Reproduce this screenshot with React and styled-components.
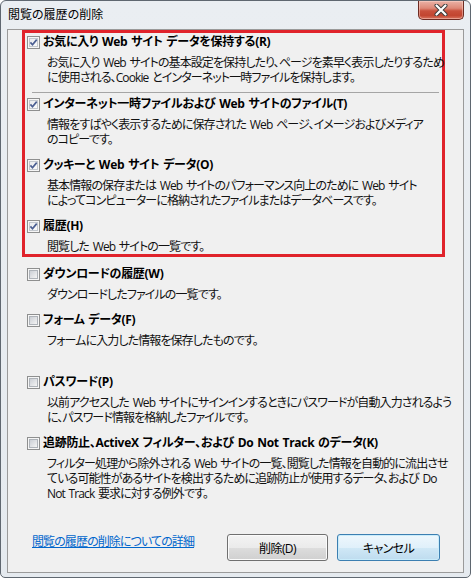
import React from 'react';
import styled, { createGlobalStyle } from 'styled-components';

const GlobalStyle = createGlobalStyle`
    html, body {
        margin: 0;
        padding: 0;
        background: #ffffff;
    }

    body {
        font-family: "Open Sans", "Noto Sans CJK JP", sans-serif;
        font-size: 12px;
        color: #000000;
        font-feature-settings: "palt";
    }
`

const Window = styled.div`
    box-sizing: border-box;
    width: 471px;
    border: 1px solid #5f6770;
    border-radius: 6px 6px 5px 5px;
    background: linear-gradient(#eaeef2, #e5eaef);
    padding: 0 6px 4px 6px;
`

const TitleBar = styled.div`
    display: flex;
    align-items: center;
    justify-content: space-between;
    height: 28px;
`

const Title = styled.span`
    padding-left: 1px;
    line-height: 16px;
    color: #000000;
`

const CloseButton = styled.div`
    align-self: flex-start;
    box-sizing: border-box;
    width: 46px;
    height: 19px;
    border: 1px solid #6d2b22;
    border-top: none;
    border-radius: 0 0 5px 5px;
    background: linear-gradient(#eab2a6 0%, #dd8877 40%, #c9503c 55%, #c24530 80%, #d9745f 100%);
    box-shadow: inset 0 0 0 1px rgba(255, 220, 210, 0.45);
    display: flex;
    align-items: center;
    justify-content: center;
`

const Panel = styled.div`
    border: 1px solid #9a9a9a;
    background: #f0f0f0;
    padding-bottom: 11px;
`

const Group = styled.div`
    margin: ${p => p.$marked ? '0 18px 0 14px' : '9px 18px 0 14px'};
    border: ${p => p.$marked ? '3px solid #e0232b' : 'none'};
    padding: ${p => p.$marked ? '1px 0 0 2px' : '0 0 0 5px'};
`

const Item = styled.div`
    margin-top: ${p => p.$gap}px;
`

const Row = styled.div`
    display: flex;
    align-items: center;
    gap: 3px;
    height: 16px;
`

const Box = styled.span`
    position: relative;
    box-sizing: border-box;
    width: 13px;
    height: 13px;
    flex: none;
    border: 1px solid #8e8f8f;
    background: #f6f6f6;

    &::before {
        content: "";
        position: absolute;
        left: 1px;
        top: 1px;
        width: 9px;
        height: 9px;
        box-sizing: border-box;
        border: 1px solid ${p => p.$checked ? '#c3c8ce' : '#aeb3b9'};
        background: ${p => p.$checked
            ? 'linear-gradient(135deg, #e9ebee, #fbfbfb)'
            : 'linear-gradient(135deg, #cbcfd5, #f4f4f4)'};
    }

    svg {
        position: absolute;
        left: 0;
        top: 0;
    }
`

const Label = styled.span`
    font-weight: 700;
    line-height: 16px;
    letter-spacing: -0.3px;
    word-spacing: 1px;
    white-space: nowrap;
`

const Desc = styled.div`
    margin-top: 5px;
    padding-left: 20px;
    line-height: 15px;
    letter-spacing: -0.9px;
    word-spacing: 1.5px;
    white-space: nowrap;
    color: #111111;
`

const Line = styled.div``

const Separator = styled.div`
    height: 1px;
    margin: 7px 3px 3px 5px;
    background: #a5a5a5;
`

const Footer = styled.div`
    display: flex;
    align-items: flex-start;
    margin-top: 33px;
    padding: 0 23px 0 24px;
`

const Link = styled.a`
    color: #0066cc;
    text-decoration: underline;
    line-height: 16px;
    letter-spacing: -0.9px;
    cursor: pointer;
`

const Buttons = styled.div`
    margin-left: auto;
    display: flex;
    gap: 9px;
`

const Button = styled.button`
    box-sizing: border-box;
    width: ${p => p.$width}px;
    height: 27px;
    padding: 0;
    border: 1px solid ${p => p.$default ? '#3c7fb1' : '#707070'};
    border-radius: 3px;
    background: ${p => p.$default
        ? 'linear-gradient(#eef7fc 0%, #e0f0fa 50%, #d0e8f6 51%, #bedcef 100%)'
        : 'linear-gradient(#f3f3f3 0%, #ebebeb 50%, #dddddd 51%, #d0d0d0 100%)'};
    box-shadow: inset 0 0 0 1px ${p => p.$default ? '#c9ecfb' : '#fbfbfb'};
    font-family: inherit;
    font-size: 12px;
    font-feature-settings: "palt";
    letter-spacing: -0.6px;
    color: #000000;
`

function CheckBox({ checked }) {
    return (
        <Box $checked={checked}>
            {checked && (
                <svg width="11" height="11" viewBox="0 0 11 11">
                    <path d="M2.4 5.4 L4.5 7.8 L8.7 2.6" fill="none" stroke="#4b5f92" strokeWidth="1.7" />
                </svg>
            )}
        </Box>
    );
}

const marked = [
    {
        label: 'お気に入り Web サイト データを保持する(R)',
        lines: [
            'お気に入り Web サイトの基本設定を保持したり、ページを素早く表示したりするため',
            'に使用される、Cookie とインターネット一時ファイルを保持します。'
        ],
        gap: 0,
        separator: true
    },
    {
        label: 'インターネット一時ファイルおよび Web サイトのファイル(T)',
        lines: [
            '情報をすばやく表示するために保存された Web ページ、イメージおよびメディア',
            'のコピーです。'
        ],
        gap: 0
    },
    {
        label: 'クッキーと Web サイト データ(O)',
        lines: [
            '基本情報の保存または Web サイトのパフォーマンス向上のために Web サイト',
            'によってコンピューターに格納されたファイルまたはデータベースです。'
        ],
        gap: 10
    },
    {
        label: '履歴(H)',
        lines: ['閲覧した Web サイトの一覧です。'],
        gap: 10
    }
];

const others = [
    {
        label: 'ダウンロードの履歴(W)',
        lines: ['ダウンロードしたファイルの一覧です。'],
        gap: 0
    },
    {
        label: 'フォーム データ(F)',
        lines: ['フォームに入力した情報を保存したものです。'],
        gap: 10
    },
    {
        label: 'パスワード(P)',
        lines: [
            '以前アクセスした Web サイトにサインインするときにパスワードが自動入力されるよう',
            'に、パスワード情報を格納したファイルです。'
        ],
        gap: 26
    },
    {
        label: '追跡防止、ActiveX フィルター、および Do Not Track のデータ(K)',
        lines: [
            'フィルター処理から除外される Web サイトの一覧、閲覧した情報を自動的に流出させ',
            'ている可能性があるサイトを検出するために追跡防止が使用するデータ、および Do',
            'Not Track 要求に対する例外です。'
        ],
        gap: 10
    }
];

function Option({ label, lines, gap, separator, checked }) {
    return (
        <Item $gap={gap}>
            <Row>
                <CheckBox checked={checked} />
                <Label>{label}</Label>
            </Row>
            <Desc>
                {lines.map(line => <Line key={line}>{line}</Line>)}
            </Desc>
            {separator && <Separator />}
        </Item>
    );
}

function App() {
    return (
        <>
            <GlobalStyle />
            <Window>
                <TitleBar>
                    <Title>閲覧の履歴の削除</Title>
                    <CloseButton>
                        <svg width="14" height="12" viewBox="0 0 14 12">
                            <path d="M2.5 1.5 L11.5 10.5 M11.5 1.5 L2.5 10.5" stroke="#3a3a3a" strokeWidth="4" strokeLinecap="round" />
                            <path d="M2.5 1.5 L11.5 10.5 M11.5 1.5 L2.5 10.5" stroke="#ffffff" strokeWidth="2.2" strokeLinecap="round" />
                        </svg>
                    </CloseButton>
                </TitleBar>
                <Panel>
                    <Group $marked>
                        {marked.map(o => <Option key={o.label} {...o} checked />)}
                    </Group>
                    <Group>
                        {others.map(o => <Option key={o.label} {...o} checked={false} />)}
                    </Group>
                    <Footer>
                        <Link>閲覧の履歴の削除についての詳細</Link>
                        <Buttons>
                            <Button $width={101}>削除(D)</Button>
                            <Button $width={103} $default>キャンセル</Button>
                        </Buttons>
                    </Footer>
                </Panel>
            </Window>
        </>
    );
}

export default App;
